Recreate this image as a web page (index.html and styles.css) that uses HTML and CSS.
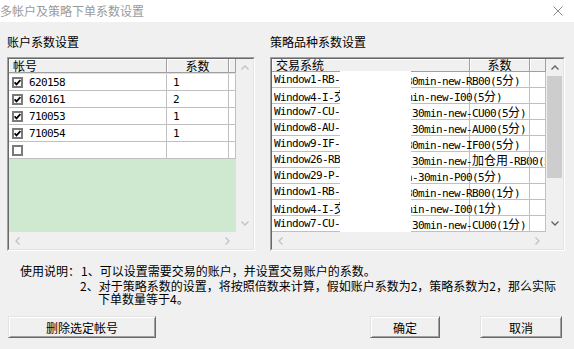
FILE: index.html
```html
<!DOCTYPE html>
<html lang="zh-CN">
<head>
    <meta charset="UTF-8">
    <meta name="viewport" content="width=device-width, initial-scale=1.0">
    <title>多帐户及策略下单系数设置</title>
    <link rel="stylesheet" href="styles.css">
</head>
<body>
    <div class="dialog">
        <div class="titlebar">
            <span class="title">多帐户及策略下单系数设置</span>
            <svg class="close-btn" width="10" height="10" viewBox="0 0 10 10">
                <path d="M0.5 0.5L9.5 9.5M9.5 0.5L0.5 9.5" stroke="#8c8c8c" stroke-width="1" fill="none"/>
            </svg>
        </div>

        <div class="panels">
            <!-- 账户 -->
            <div class="panel account-panel">
                <div class="panel-label">账户系数设置</div>
                <div class="grid">
                    <div class="grid-inner">
                        <div class="grid-main">
                            <div class="cells account-cells">
                                <div class="head-row">
                                    <div class="hcell acc-col">帐号</div>
                                    <div class="hcell acc-coef center">系数</div>
                                    <div class="hcell acc-rest"></div>
                                </div>
                                <div class="account-rows" id="accountRows"></div>
                            </div>
                            <div class="vscroll">
                                <div class="arrow"><svg width="8" height="5" viewBox="0 0 8 5"><path d="M0.5 4.5L4 1L7.5 4.5" fill="none" stroke="currentColor" stroke-width="1.3"/></svg></div>
                                <div class="track"></div>
                                <div class="arrow"><svg width="8" height="5" viewBox="0 0 8 5"><path d="M0.5 0.5L4 4L7.5 0.5" fill="none" stroke="currentColor" stroke-width="1.3"/></svg></div>
                            </div>
                        </div>
                        <div class="hscroll">
                            <div class="arrow"><svg width="5" height="8" viewBox="0 0 5 8"><path d="M4.5 0.5L1 4L4.5 7.5" fill="none" stroke="currentColor" stroke-width="1.3"/></svg></div>
                            <div class="track"></div>
                            <div class="arrow"><svg width="5" height="8" viewBox="0 0 5 8"><path d="M0.5 0.5L4 4L0.5 7.5" fill="none" stroke="currentColor" stroke-width="1.3"/></svg></div>
                            <div class="corner"></div>
                        </div>
                    </div>
                </div>
            </div>

            <!-- 策略品种 -->
            <div class="panel strategy-panel">
                <div class="panel-label">策略品种系数设置</div>
                <div class="grid">
                    <div class="grid-inner">
                        <div class="grid-main">
                            <div class="cells strategy-cells">
                                <div class="head-row">
                                    <div class="hcell st-name">交易系统</div>
                                    <div class="hcell st-coef center">系数</div>
                                    <div class="hcell st-rest"></div>
                                </div>
                                <div class="strategy-rows" id="strategyRows"></div>
                                <div class="mask"></div>
                            </div>
                            <div class="vscroll">
                                <div class="arrow active"><svg width="8" height="5" viewBox="0 0 8 5"><path d="M0.5 4.5L4 1L7.5 4.5" fill="none" stroke="currentColor" stroke-width="1.3"/></svg></div>
                                <div class="track"><div class="thumb"></div></div>
                                <div class="arrow active"><svg width="8" height="5" viewBox="0 0 8 5"><path d="M0.5 0.5L4 4L7.5 0.5" fill="none" stroke="currentColor" stroke-width="1.3"/></svg></div>
                            </div>
                        </div>
                        <div class="hscroll">
                            <div class="arrow"><svg width="5" height="8" viewBox="0 0 5 8"><path d="M4.5 0.5L1 4L4.5 7.5" fill="none" stroke="currentColor" stroke-width="1.3"/></svg></div>
                            <div class="track"></div>
                            <div class="arrow"><svg width="5" height="8" viewBox="0 0 5 8"><path d="M0.5 0.5L4 4L0.5 7.5" fill="none" stroke="currentColor" stroke-width="1.3"/></svg></div>
                            <div class="corner"></div>
                        </div>
                    </div>
                </div>
            </div>
        </div>

        <div class="usage">
            <div class="usage-first"><span class="usage-lead">使用说明：</span>1、可以设置需要交易的账户，并设置交易账户的系数。</div>
            <div class="usage-second">2、对于策略系数的设置，将按照倍数来计算，假如账户系数为2，策略系数为2，那么实际下单数量等于4。</div>
        </div>

        <div class="buttons">
            <button class="btn btn-delete">删除选定帐号</button>
            <button class="btn btn-ok">确定</button>
            <button class="btn btn-cancel">取消</button>
        </div>
    </div>

    <script>
        const accounts = [
            { id: '620158', coef: '1', checked: true },
            { id: '620161', coef: '2', checked: true },
            { id: '710053', coef: '1', checked: true },
            { id: '710054', coef: '1', checked: true },
            { id: '', coef: '', checked: false }
        ];

        const fen = '<span class="cj">分</span>';
        const strategies = [
            { head: 'Window1-RB-', tail: `30min-new-RB00(5${fen})` },
            { head: 'Window4-I-<span class="cj">交</span>', tail: `min-new-I00(5${fen})` },
            { head: 'Window7-CU-', tail: `-30min-new-CU00(5${fen})` },
            { head: 'Window8-AU-', tail: `-30min-new-AU00(5${fen})` },
            { head: 'Window9-IF-', tail: `30min-new-IF00(5${fen})` },
            { head: 'Window26-RB', tail: '-30min-new-<span class="cj">加仓用</span>-RB00(5' },
            { head: 'Window29-P-', tail: `n-30min-P00(5${fen})` },
            { head: 'Window1-RB-', tail: `30min-new-RB00(1${fen})` },
            { head: 'Window4-I-<span class="cj">交</span>', tail: `min-new-I00(1${fen})` },
            { head: 'Window7-CU-', tail: `-30min-new-CU00(1${fen})` }
        ];

        const checkBox = (checked) => `
            <svg class="chk" width="11" height="11" viewBox="0 0 11 11">
                <rect x="1" y="1" width="9" height="9" fill="#fff" stroke="#7a7a7a" stroke-width="2"/>
                ${checked ? '<path d="M2.6 5.4L4.5 7.4L8.4 3.2" fill="none" stroke="#000" stroke-width="1.7"/>' : ''}
            </svg>`;

        const accountRows = document.getElementById('accountRows');
        accounts.forEach((acc) => {
            const div = document.createElement('div');
            div.classList.add('row');
            div.innerHTML = `
                <div class="cell acc-col">${checkBox(acc.checked)}<span class="acc-id">${acc.id}</span></div>
                <div class="cell acc-coef">${acc.coef}</div>
                <div class="cell acc-rest"></div>
            `;
            accountRows.appendChild(div);
        });

        const strategyRows = document.getElementById('strategyRows');
        strategies.forEach((st) => {
            const div = document.createElement('div');
            div.classList.add('row');
            div.innerHTML = `
                <div class="cell st-name"><span class="st-head">${st.head}</span><span class="st-tail">${st.tail}</span></div>
                <div class="cell st-coef"></div>
                <div class="cell st-rest"></div>
            `;
            strategyRows.appendChild(div);
        });
    </script>
</body>
</html>
```

FILE: styles.css
```css
/* Base */
* {
    box-sizing: border-box;
}

body {
    margin: 0;
    background-color: #f0f0f0;
    font-family: "Noto Sans CJK SC", "Liberation Sans", sans-serif;
    font-size: 12px;
    color: #000;
}

.dialog {
    width: 574px;
    height: 349px;
    overflow: hidden;
}

/* Title bar */
.titlebar {
    height: 22px;
    background-color: #fff;
    display: flex;
    align-items: center;
    justify-content: space-between;
    padding-right: 11px;
}

.title {
    color: #9a9a9a;
    line-height: 16px;
}

/* Panels */
.panels {
    display: flex;
    gap: 15px;
    padding: 12px 0 0 7px;
}

.panel-label {
    height: 16px;
    line-height: 16px;
    margin-bottom: 7px;
}

.account-panel {
    width: 248px;
}

.strategy-panel {
    width: 295px;
}

.grid {
    height: 194px;
    border: 1px solid;
    border-color: #a0a0a0 #fff #fff #a0a0a0;
}

.grid-inner {
    height: 100%;
    border: 1px solid;
    border-color: #696969 #e3e3e3 #e3e3e3 #696969;
    display: flex;
    flex-direction: column;
}

.grid-main {
    flex: 1;
    display: flex;
    min-height: 0;
}

.cells {
    flex: 1;
    position: relative;
    overflow: hidden;
}

.account-cells {
    background-color: #cfe8d0;
}

.strategy-cells {
    background-color: #fff;
}

/* Header */
.head-row {
    display: flex;
    height: 14px;
}

.strategy-cells .head-row {
    height: 13px;
}

.hcell {
    background-color: #f0f0f0;
    border-right: 1px solid #a0a0a0;
    border-bottom: 1px solid #a0a0a0;
    box-shadow: inset 1px 1px #fff;
    padding-left: 4px;
    line-height: 13px;
    white-space: nowrap;
}

.strategy-cells .hcell {
    line-height: 12px;
}

.center {
    text-align: center;
    padding-left: 0;
}

/* Rows */
.account-rows {
    margin-top: 1px;
}

.row {
    display: flex;
    background-color: #fff;
}

.account-rows .row {
    height: 17px;
}

.strategy-rows .row {
    height: 16px;
}

.cell {
    border-right: 1px solid #c0c0c0;
    border-bottom: 1px solid #c0c0c0;
    display: flex;
    align-items: center;
    white-space: nowrap;
    font-family: "DejaVu Sans Mono", "Liberation Mono", monospace;
    font-size: 11px;
    letter-spacing: -0.62px;
}

.cj {
    font-family: "Noto Sans CJK SC", sans-serif;
    font-size: 12px;
    letter-spacing: 0;
}

.acc-col {
    width: 158px;
    flex-shrink: 0;
}

.acc-coef {
    width: 62px;
    flex-shrink: 0;
}

.acc-rest {
    flex: 1;
}

.cell.acc-col {
    padding-left: 3px;
}

.cell.acc-coef {
    padding-left: 6px;
}

.chk {
    flex-shrink: 0;
    margin-right: 6px;
}

.st-name {
    width: 198px;
    flex-shrink: 0;
}

.st-coef {
    width: 60px;
    flex-shrink: 0;
}

.st-rest {
    flex: 1;
}

.cell.st-name {
    padding-left: 2px;
}

.st-head {
    width: 132px;
    flex-shrink: 0;
    overflow: hidden;
}

.st-tail {
    flex-shrink: 0;
}

/* white block over the middle of the names */
.mask {
    position: absolute;
    left: 68px;
    top: 12px;
    width: 71px;
    height: 161px;
    background-color: #fff;
}

/* Scrollbars */
.vscroll {
    width: 17px;
    background-color: #f0f0f0;
    display: flex;
    flex-direction: column;
}

.hscroll {
    height: 17px;
    display: flex;
    background-color: #f0f0f0;
}

.arrow {
    width: 17px;
    height: 17px;
    flex-shrink: 0;
    display: flex;
    align-items: center;
    justify-content: center;
    color: #c2c2c2;
}

.arrow.active {
    color: #606060;
}

.track {
    flex: 1;
    padding: 0 1px;
}

.thumb {
    height: 102px;
    background-color: #cdcdcd;
}

.corner {
    width: 17px;
}

/* Usage notes */
.usage {
    margin-top: 13px;
}

.usage-first {
    padding-left: 20px;
    line-height: 14px;
}

.usage-lead {
    margin-right: 1px;
}

.usage-second {
    margin: 1px 0 0 98px;
    width: 464px;
    text-indent: -18px;
    line-height: 13px;
}

/* Buttons */
.buttons {
    display: flex;
    margin-top: 11px;
    padding: 0 12px 0 8px;
}

.btn {
    height: 22px;
    padding: 0;
    background-color: #f0f0f0;
    border: 1px solid;
    border-color: #e3e3e3 #696969 #696969 #e3e3e3;
    box-shadow: inset 1px 1px #fff, inset -1px -1px #a0a0a0;
    font-family: inherit;
    font-size: 12px;
    color: #000;
}

.btn-delete {
    width: 148px;
    margin-right: auto;
}

.btn-ok {
    width: 70px;
    margin-right: 40px;
}

.btn-cancel {
    width: 82px;
}
```
